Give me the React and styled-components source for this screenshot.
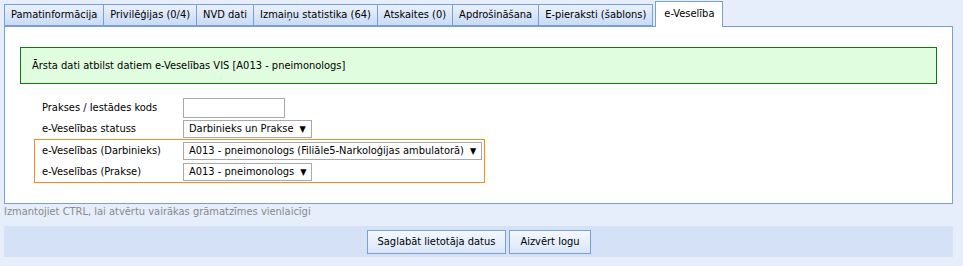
import React from "react";
import styled, { createGlobalStyle } from "styled-components";

const GlobalStyle = createGlobalStyle`
  body {
    margin: 0;
    background: #e6edfb;
    font-family: "DejaVu Sans Condensed", "DejaVu Sans", sans-serif;
    font-size: 11px;
    color: #000;
  }
`;

const tabs = [
  "Pamatinformācija",
  "Privilēģijas (0/4)",
  "NVD dati",
  "Izmaiņu statistika (64)",
  "Atskaites (0)",
  "Apdrošināšana",
  "E-pieraksti (šablons)",
];

const App = () => {
  return (
    <Page>
      <GlobalStyle />
      <TabBar>
        {tabs.map((t) => (
          <Tab key={t}>{t}</Tab>
        ))}
        <Tab active>e-Veselība</Tab>
      </TabBar>
      <Panel>
        <Notice>Ārsta dati atbilst datiem e-Veselības VIS [A013 - pneimonologs]</Notice>
        <Form>
          <Row>
            <Label>Prakses / Iestādes kods</Label>
            <TextInput />
          </Row>
          <Row>
            <Label>e-Veselības statuss</Label>
            <Select>Darbinieks un Prakse <Arrow>▼</Arrow></Select>
          </Row>
          <Highlight>
            <Row>
              <Label>e-Veselības (Darbinieks)</Label>
              <Select>A013 - pneimonologs (Filiāle5-Narkoloģijas ambulatorā) <Arrow>▼</Arrow></Select>
            </Row>
            <Row>
              <Label>e-Veselības (Prakse)</Label>
              <Select>A013 - pneimonologs <Arrow>▼</Arrow></Select>
            </Row>
          </Highlight>
        </Form>
      </Panel>
      <Hint>Izmantojiet CTRL, lai atvērtu vairākas grāmatzīmes vienlaicīgi</Hint>
      <ButtonBar>
        <Button>Saglabāt lietotāja datus</Button>
        <Button>Aizvērt logu</Button>
      </ButtonBar>
    </Page>
  );
};

export default App;

const Page = styled.div`
  width: 949px;
  padding: 1px 0 0 4px;
`;

const TabBar = styled.div`
  display: flex;
  align-items: flex-end;
  height: 25px;
  position: relative;
  z-index: 1;
`;

const Tab = styled.div`
  box-sizing: border-box;
  height: ${(p) => (p.active ? "26px" : "22px")};
  padding: 0 ${(p) => (p.active ? "8px" : "6px")};
  margin-left: ${(p) => (p.active ? "2px" : "-1px")};
  margin-bottom: ${(p) => (p.active ? "-1px" : "0")};
  line-height: ${(p) => (p.active ? "24px" : "20px")};
  border: 1px solid #7c9fd3;
  border-bottom: ${(p) => (p.active ? "none" : "1px solid #7c9fd3")};
  background: ${(p) =>
    p.active ? "#fff" : "linear-gradient(#eaf1fd, #c9dbf6)"};
  white-space: nowrap;
  &:first-child {
    margin-left: 0;
  }
`;

const Panel = styled.div`
  box-sizing: border-box;
  height: 178px;
  background: #fff;
  border: 1px solid #7c9fd3;
  padding: 20px 15px 0 15px;
`;

const Notice = styled.div`
  height: 37px;
  line-height: 35px;
  box-sizing: border-box;
  background: #e0fde0;
  border: 1px solid #0a7d0a;
  padding: 0 11px;
`;

const Form = styled.div`
  margin: 13px 0 0 14px;
  width: 451px;
  display: flex;
  flex-direction: column;
`;

const Row = styled.div`
  display: grid;
  grid-template-columns: 141px auto;
  align-items: center;
  justify-items: start;
  height: 21px;
  padding-left: 8px;
`;

const Label = styled.span`
  white-space: nowrap;
`;

const Highlight = styled.div`
  border: 1px solid #f68b1f;
  margin-top: 0;
  padding: 0;
  & > ${Row} {
    padding-left: 7px;
  }
`;

const TextInput = styled.div`
  box-sizing: border-box;
  width: 102px;
  height: 20px;
  border: 1px solid #a9a9a9;
  background: #fff;
`;

const Select = styled.div`
  box-sizing: border-box;
  height: 18px;
  line-height: 16px;
  border: 1px solid #a9a9a9;
  background: #fff;
  padding: 0 5px;
  white-space: nowrap;
  display: flex;
  align-items: center;
  gap: 6px;
`;

const Arrow = styled.span`
  font-size: 9px;
`;

const Hint = styled.div`
  color: #8a8a8a;
  height: 22px;
  line-height: 16px;
`;

const ButtonBar = styled.div`
  background: #d4e1f7;
  height: 31px;
  display: flex;
  justify-content: center;
  align-items: center;
  gap: 3px;
`;

const Button = styled.button`
  font-family: inherit;
  font-size: 11px;
  height: 24px;
  padding: 0 10px;
  border: 1px solid #7c9fd3;
  background: linear-gradient(#f4f8fe, #d9e6f9);
  color: #000;
`;
